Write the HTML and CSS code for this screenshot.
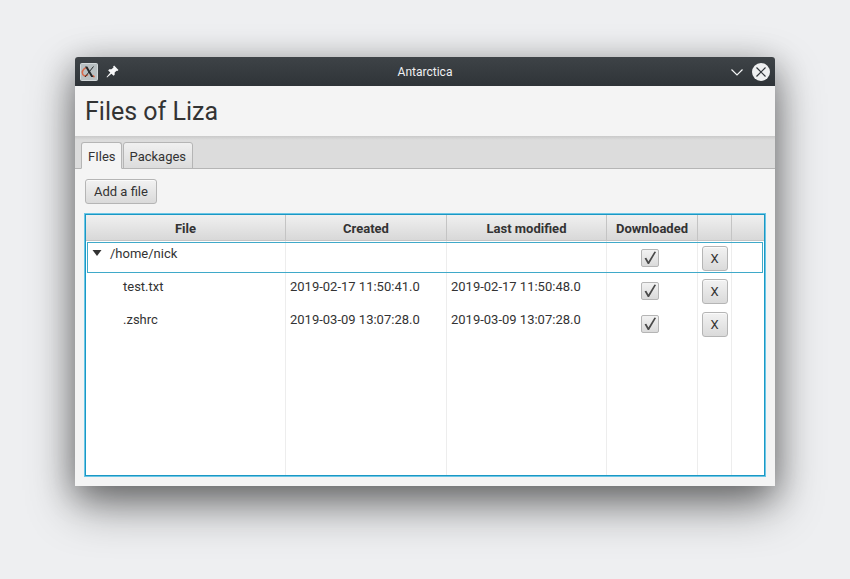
FILE: index.html
```html
<!DOCTYPE html>
<html lang="en">
<head>
<meta charset="utf-8">
<title>Antarctica</title>
<link rel="stylesheet" href="styles.css">
</head>
<body>
<main class="window">
  <header class="titlebar">
    <div class="titlebar-side">
      <svg class="app-icon" width="18" height="18" viewBox="0 0 18 18" aria-hidden="true">
        <rect x="0.5" y="0.5" width="17" height="17" rx="1" fill="#b9c0c2" stroke="#d3d8da"/>
        <path d="M8 5C5 4 2.200 7 2.300 9.800C2.500 13 5.500 13.800 8 11.500M12.500 12.500L14.500 14" fill="none" stroke="#d9694a" stroke-width="1.600"/>
        <path d="M5 3.500H7.300L13.500 14H11.200Z" fill="#25292b"/>
        <path d="M13.500 3.500L5 14" stroke="#25292b" stroke-width="1"/>
      </svg>
      <button class="icon-button" type="button" aria-label="Pin window">
        <svg width="13" height="13" viewBox="0 0 12 12"><path d="M7.500 0.500L11.500 4.500L10.500 5.500L9.800 5.200L8 7L8 9L7 10L5 8L1 11.500L0.500 11L4 7L2 5L3 4L5 4L7 2.200L6.500 1.500Z" fill="#f8f9fa"/></svg>
      </button>
    </div>
    <span class="titlebar-text">Antarctica</span>
    <div class="titlebar-side titlebar-end">
      <button class="icon-button" type="button" aria-label="Minimize">
        <svg width="14" height="18" viewBox="0 0 14 18"><path d="M1.500 6.500L7 12L12.500 6.500" fill="none" stroke="#f2f4f5" stroke-width="1.200"/></svg>
      </button>
      <button class="icon-button" type="button" aria-label="Close">
        <svg width="18" height="18" viewBox="0 0 18 18"><circle cx="9" cy="9" r="9" fill="#eff0f1"/><path d="M4.500 4.500L13.500 13.500M13.500 4.500L4.500 13.500" stroke="#31363b" stroke-width="1.200"/></svg>
      </button>
    </div>
  </header>
  <h1 class="heading">Files of Liza</h1>
  <div class="tabs" role="tablist">
    <button class="tab tab-active" type="button" role="tab" aria-selected="true">FIles</button>
    <button class="tab" type="button" role="tab" aria-selected="false">Packages</button>
  </div>
  <section class="content">
    <button class="button" type="button">Add a file</button>
    <div class="table-frame">
      <table class="files">
        <colgroup>
          <col class="col-file"><col class="col-created"><col class="col-modified"><col class="col-downloaded"><col class="col-remove"><col class="col-rest">
        </colgroup>
        <thead>
          <tr><th>File</th><th>Created</th><th>Last modified</th><th>Downloaded</th><th></th><th></th></tr>
        </thead>
        <tbody>
          <tr class="row row-focused">
            <td class="name"><div class="branch"><button class="expander" type="button" aria-label="Collapse"><svg width="10" height="6" viewBox="0 0 10 6"><path d="M0.500 0H9.500L5 6Z" fill="#333"/></svg></button>/home/nick</div></td>
            <td></td><td></td>
            <td class="control control-check"><input class="check" type="checkbox" checked aria-label="/home/nick downloaded"></td>
            <td class="control"><button class="button button-remove" type="button">X</button></td>
            <td></td>
          </tr>
          <tr class="row">
            <td class="name name-child">test.txt</td>
            <td>2019-02-17 11:50:41.0</td><td>2019-02-17 11:50:48.0</td>
            <td class="control control-check"><input class="check" type="checkbox" checked aria-label="test.txt downloaded"></td>
            <td class="control"><button class="button button-remove" type="button">X</button></td>
            <td></td>
          </tr>
          <tr class="row">
            <td class="name name-child">.zshrc</td>
            <td>2019-03-09 13:07:28.0</td><td>2019-03-09 13:07:28.0</td>
            <td class="control control-check"><input class="check" type="checkbox" checked aria-label=".zshrc downloaded"></td>
            <td class="control"><button class="button button-remove" type="button">X</button></td>
            <td></td>
          </tr>
          <tr aria-hidden="true"><td></td><td></td><td></td><td></td><td></td><td></td></tr>
        </tbody>
      </table>
    </div>
  </section>
</main>
</body>
</html>
```
FILE: styles.css
```css
* {
  box-sizing: border-box;
}

body {
  margin: 0;
  min-height: 100vh;
  padding: 57px 75px 93px;
  display: flex;
  background: #eeeff1;
  color: #333;
  font: 13px/16px Roboto, "Liberation Sans", sans-serif;
}

button {
  font: inherit;
  color: inherit;
}

.window {
  flex: 1;
  min-width: 0;
  display: flex;
  flex-direction: column;
  background: #f4f4f4;
  border-radius: 3px 3px 0 0;
  box-shadow: 0 20px 48px rgba(0, 0, 0, 0.42), 0 8px 32px rgba(0, 0, 0, 0.32);
}

.titlebar {
  display: flex;
  align-items: center;
  height: 29px;
  padding: 0 5px;
  border-radius: 3px 3px 0 0;
  background: linear-gradient(#3e4347, #2f3438);
  color: #eff0f1;
}

.titlebar-side {
  flex: 1;
  display: flex;
  align-items: center;
  gap: 8px;
}

.titlebar-end {
  justify-content: flex-end;
}

.titlebar-text {
  font-size: 12px;
}

.icon-button {
  display: flex;
  padding: 0;
  border: 0;
  background: none;
}

.heading {
  margin: 0;
  padding: 10px 10px 8px;
  font-size: 25px;
  line-height: 32px;
  font-weight: 400;
}

.tabs {
  display: flex;
  align-items: flex-end;
  gap: 1px;
  height: 33px;
  padding: 0 6px;
  background: linear-gradient(#c9c9c9, #dcdcdc 4px);
  box-shadow: inset 0 -1px #b5b5b5;
}

.tab {
  height: 27px;
  padding: 2px 6px 0;
  border: 1px solid #b5b5b5;
  border-radius: 3px 3px 0 0;
  background: linear-gradient(#f0f0f0, #dcdcdc);
}

.tab-active {
  padding: 2px 5px 0 6px;
  border-bottom-color: #f4f4f4;
  background: #f4f4f4;
}

.content {
  flex: 1;
  display: flex;
  flex-direction: column;
  align-items: flex-start;
  gap: 10px;
  padding: 10px;
}

.button {
  height: 25px;
  padding: 0 8px;
  border: 1px solid #b5b5b5;
  border-radius: 3px;
  background: linear-gradient(#f2f2f2, #dadada);
  box-shadow: inset 0 1px #fbfbfb;
}

.table-frame {
  flex: 1;
  align-self: stretch;
  display: grid;
  border: 1px solid #1b98c4;
  outline: 1px solid #6cc6e6;
  background: #fff;
}

.files {
  width: 100%;
  height: 100%;
  table-layout: fixed;
  border-collapse: separate;
  border-spacing: 0;
}

.col-file {
  width: 200px;
}

.col-created {
  width: 161px;
}

.col-modified {
  width: 160px;
}

.col-downloaded {
  width: 91px;
}

.col-remove {
  width: 34px;
}

th {
  height: 26px;
  padding: 2px 0 0;
  border-right: 1px solid #c4c4c4;
  border-bottom: 1px solid #c4c4c4;
  background: linear-gradient(#f0f0f0, #d8d8d8);
}

td {
  padding: 5px 4px;
  border-right: 1px solid #ededed;
  vertical-align: top;
}

th:last-child,
td:last-child {
  border-right: 0;
}

.row {
  height: 33px;
}

.row-focused {
  outline: 1px solid #3fa9c9;
  outline-offset: -2px;
}

.name {
  padding-left: 6px;
}

.name-child {
  padding-left: 37px;
}

.branch {
  display: flex;
}

.expander {
  display: flex;
  width: 18px;
  height: 16px;
  padding: 4px 0 0;
  border: 0;
  background: none;
}

.control {
  padding: 5px 0 0;
  text-align: center;
}

.control-check {
  padding-right: 4px;
}

.check {
  appearance: none;
  width: 18px;
  height: 18px;
  margin: 3px 0 0;
  border: 1px solid #b5b5b5;
  border-radius: 2px;
  background: linear-gradient(#f2f2f2, #dadada);
}

.check::before {
  content: "";
  display: block;
  height: 100%;
  background: #4a4a4a;
  clip-path: polygon(16% 52%, 27% 48%, 40% 72%, 78% 10%, 88% 12%, 44% 88%, 36% 88%);
}

.button-remove {
  width: 26px;
  padding: 0;
}
```
